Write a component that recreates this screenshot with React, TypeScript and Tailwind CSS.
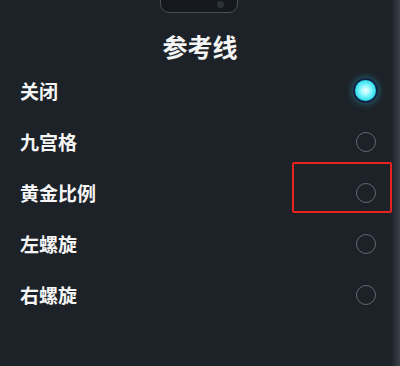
const options = [
  { label: "关闭", checked: true },
  { label: "九宫格", checked: false },
  { label: "黄金比例", checked: false },
  { label: "左螺旋", checked: false },
  { label: "右螺旋", checked: false },
];

function Radio({ checked }: { checked: boolean }) {
  if (checked) {
    return (
      <div className="w-[25px] h-[25px] shrink-0 rounded-full border-2 border-[#142347] bg-[radial-gradient(circle,#f6ffff_0%,#a0fafd_28%,#22dcec_72%)] shadow-[0_0_7px_rgba(40,220,240,0.5)]" />
    );
  }
  return <div className="w-[20px] h-[20px] shrink-0 rounded-full border-[1.5px] border-[#62686f]" />;
}

export default function App() {
  return (
    <div
      className="relative w-[400px] h-[366px] overflow-hidden bg-[#1d2228] text-[#f5f5f5]"
      style={{ fontFamily: '"Noto Sans CJK SC", "Noto Sans", sans-serif' }}
    >
      {/* notch */}
      <div className="absolute left-[160px] top-[-6px] w-[78px] h-[19px] rounded-b-[9px] border border-[#4a5058] bg-[#15191e]">
        <div className="absolute left-[56px] top-[6px] w-[7px] h-[7px] rounded-full bg-[#2c3238]" />
      </div>
      {/* phone edge */}
      <div className="absolute right-0 top-0 bottom-0 w-[9px] bg-gradient-to-r from-[#1d2228] to-[#3b4148]" />

      <div className="pt-[31px] text-center text-[25px] leading-[30px] font-bold">参考线</div>

      <div className="mt-[4px] flex flex-col">
        {options.map((o) => (
          <div key={o.label} className="h-[51px] flex items-center justify-between pl-[20px] pr-[22px]">
            <span className="text-[19px] font-bold leading-none">{o.label}</span>
            <div className="w-[25px] flex justify-center">
              <Radio checked={o.checked} />
            </div>
          </div>
        ))}
      </div>

      {/* highlight box */}
      <div className="absolute left-[292px] top-[162px] w-[100px] h-[51px] border-[2.5px] border-[#e8231f] rounded-[2px]" />
    </div>
  );
}
